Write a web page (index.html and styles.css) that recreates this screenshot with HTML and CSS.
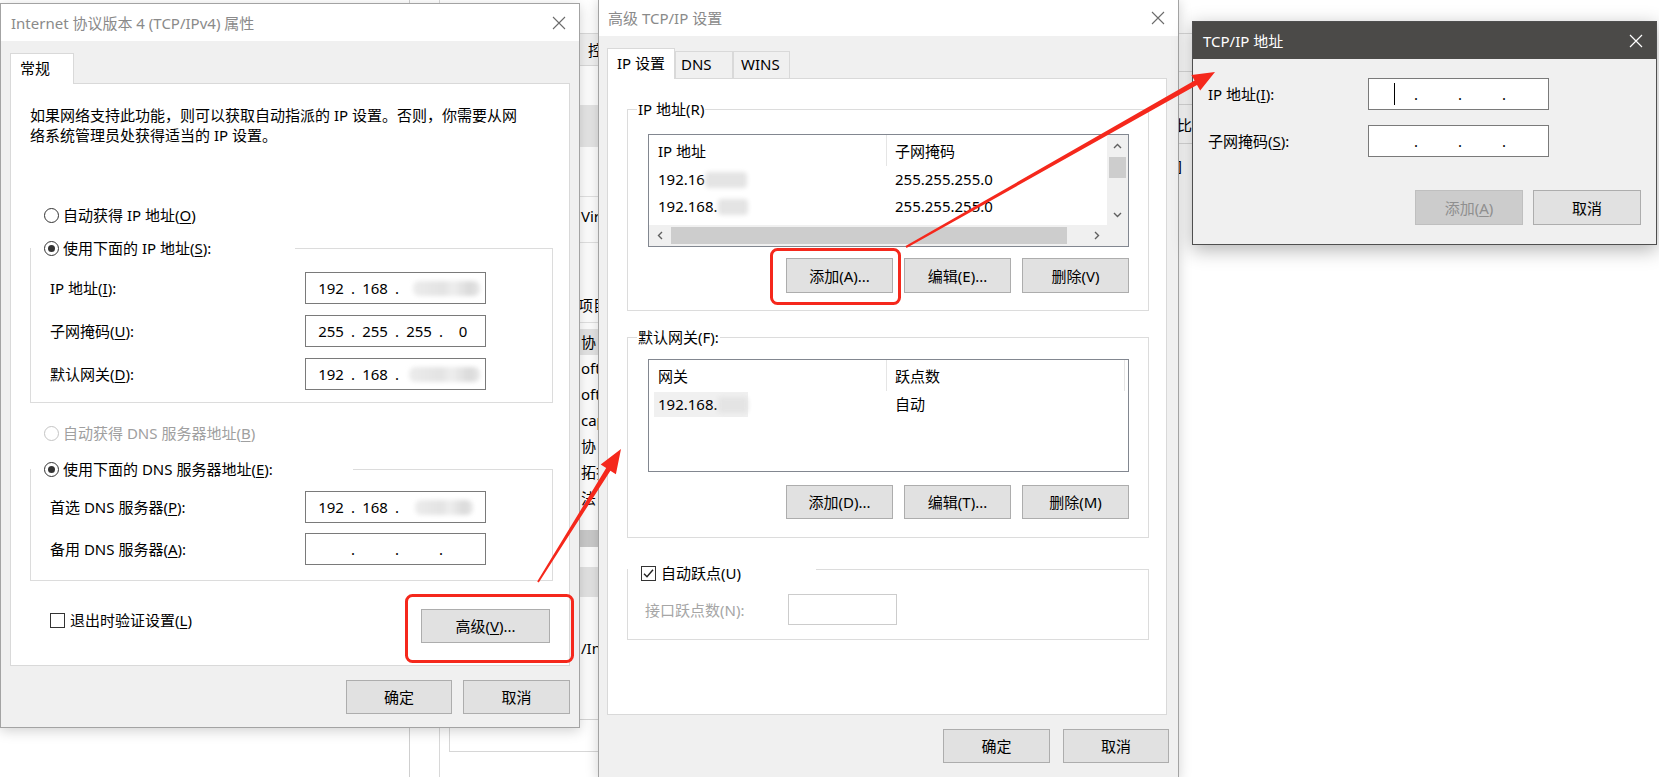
FILE: index.html
```html
<!DOCTYPE html>
<html lang="zh-CN">
<head>
<meta charset="utf-8">
<title>TCP/IP 设置</title>
<link rel="stylesheet" href="styles.css">
</head>
<body>

<div class="bg bg1">
  <div class="bg1-pane">
    <div class="bgrow r-a"></div>
    <div class="bgrow r-b"><span class="bgt">控</span></div>
    <div class="bgrow r-c"></div>
    <div class="bgrow r-d"></div>
    <div class="bgrow r-e"></div>
    <div class="bgrow r-f"><span class="bgt">Vir</span></div>
    <div class="bgrow r-g"><span class="bgt">项目</span></div>
    <div class="bglist">
      <div class="bgli sel"><span class="bgt">协</span></div>
      <div class="bgli"><span class="bgt">oft</span></div>
      <div class="bgli"><span class="bgt">oft</span></div>
      <div class="bgli"><span class="bgt">cap</span></div>
      <div class="bgli"><span class="bgt">协</span></div>
      <div class="bgli"><span class="bgt">拓扑</span></div>
      <div class="bgli"><span class="bgt">法</span></div>
    </div>
    <div class="band dark"></div>
    <div class="band light"></div>
    <div class="bgtext2"><span class="bgt">/In<br>互通</span></div>
    <div class="bgbox"></div>
  </div>
</div>

<div class="bg bg2">
  <div class="b2row b2-a"></div>
  <div class="b2row b2-b"></div>
  <div class="b2row b2-c"></div>
  <div class="b2row b2-d"><span class="bgt">比适</span></div>
  <div class="b2-t"><span class="bgt">]<br>缆<br>ek</span></div>
</div>

<!-- Dialog 1 -->
<div class="win win-props">
  <div class="titlebar">
    <span class="title">Internet 协议版本 4 (TCP/IPv4) 属性</span>
    <span class="close"><svg width="14" height="14" viewBox="0 0 14 14"><path d="M1 1L13 13M13 1L1 13" stroke="currentColor" stroke-width="1.1" fill="none"/></svg></span>
  </div>
  <div class="wbody">
    <div class="tabs"><div class="tab active tab-gen">常规</div></div>
    <div class="panel">
      <p class="desc">如果网络支持此功能，则可以获取自动指派的 IP 设置。否则，你需要从网<br>络系统管理员处获得适当的 IP 设置。</p>
      <div class="radio r1"><span class="rb"></span><span>自动获得 IP 地址(<u>O</u>)</span></div>
      <div class="group g1">
        <div class="legend"><div class="radio"><span class="rb on"></span><span>使用下面的 IP 地址(<u>S</u>):</span></div></div>
        <div class="rows">
          <div class="frow"><span class="lbl">IP 地址(<u>I</u>):</span>
            <div class="ip"><span class="seg">192</span><span class="dot">.</span><span class="seg">168</span><span class="dot">.</span><span class="smwrap"><i class="smudge sm-ip"></i></span></div></div>
          <div class="frow"><span class="lbl">子网掩码(<u>U</u>):</span>
            <div class="ip"><span class="seg">255</span><span class="dot">.</span><span class="seg">255</span><span class="dot">.</span><span class="seg">255</span><span class="dot">.</span><span class="seg">0</span></div></div>
          <div class="frow"><span class="lbl">默认网关(<u>D</u>):</span>
            <div class="ip"><span class="seg">192</span><span class="dot">.</span><span class="seg">168</span><span class="dot">.</span><span class="smwrap"><i class="smudge sm-gw"></i></span></div></div>
        </div>
      </div>
      <div class="radio dis r3"><span class="rb"></span><span>自动获得 DNS 服务器地址(<u>B</u>)</span></div>
      <div class="group g2">
        <div class="legend"><div class="radio"><span class="rb on"></span><span>使用下面的 DNS 服务器地址(<u>E</u>):</span></div></div>
        <div class="rows">
          <div class="frow"><span class="lbl">首选 DNS 服务器(<u>P</u>):</span>
            <div class="ip"><span class="seg">192</span><span class="dot">.</span><span class="seg">168</span><span class="dot">.</span><span class="smwrap"><i class="smudge sm-dns"></i></span></div></div>
          <div class="frow"><span class="lbl">备用 DNS 服务器(<u>A</u>):</span>
            <div class="ip"><span class="seg"></span><span class="dot">.</span><span class="seg"></span><span class="dot">.</span><span class="seg"></span><span class="dot">.</span><span class="seg"></span></div></div>
        </div>
      </div>
      <div class="bottom-row">
        <div class="check"><span class="cb"></span><span>退出时验证设置(<u>L</u>)</span></div>
        <div class="btn btn-adv">高级(<u>V</u>)...</div>
      </div>
    </div>
    <div class="footer f1">
      <div class="btn b-ok">确定</div>
      <div class="btn b-cancel">取消</div>
    </div>
  </div>
</div>

<!-- Dialog 2 -->
<div class="win win-adv">
  <div class="titlebar">
    <span class="title">高级 TCP/IP 设置</span>
    <span class="close"><svg width="14" height="14" viewBox="0 0 14 14"><path d="M1 1L13 13M13 1L1 13" stroke="currentColor" stroke-width="1.1" fill="none"/></svg></span>
  </div>
  <div class="wbody">
    <div class="tabs">
      <div class="tab active tab-ip">IP 设置</div>
      <div class="tab idle tab-dns">DNS</div>
      <div class="tab idle tab-wins">WINS</div>
    </div>
    <div class="panel">
      <div class="group ga">
        <div class="legend leg2">IP 地址(R)</div>
        <div class="gin">
          <div class="lv lv-ip">
            <div class="lv-main">
              <div class="lv-head"><div class="lh c1">IP 地址</div><div class="lh c2">子网掩码</div></div>
              <div class="lv-row"><div class="c1">192.16<i class="lsm w42"></i></div><div class="c2">255.255.255.0</div></div>
              <div class="lv-row"><div class="c1">192.168.<i class="lsm w30"></i></div><div class="c2">255.255.255.0</div></div>
            </div>
            <div class="vscroll">
              <div class="sbtn"><svg width="9" height="6" viewBox="0 0 9 6"><path d="M1 5L4.5 1.5L8 5" fill="none" stroke="#606060" stroke-width="1.4"/></svg></div>
              <div class="vthumb"></div>
              <div class="vfill"></div>
              <div class="sbtn"><svg width="9" height="6" viewBox="0 0 9 6"><path d="M1 1L4.5 4.5L8 1" fill="none" stroke="#606060" stroke-width="1.4"/></svg></div>
            </div>
            <div class="hscroll">
              <div class="sbtn"><svg width="6" height="9" viewBox="0 0 6 9"><path d="M5 1L1.5 4.5L5 8" fill="none" stroke="#606060" stroke-width="1.4"/></svg></div>
              <div class="hthumb"></div>
              <div class="sbtn"><svg width="6" height="9" viewBox="0 0 6 9"><path d="M1 1L4.5 4.5L1 8" fill="none" stroke="#606060" stroke-width="1.4"/></svg></div>
            </div>
            <div class="corner"></div>
          </div>
          <div class="lv-btns bt-a">
            <div class="btn">添加(A)...</div>
            <div class="btn">编辑(E)...</div>
            <div class="btn">删除(V)</div>
          </div>
        </div>
      </div>
      <div class="group gb">
        <div class="legend leg2">默认网关(F):</div>
        <div class="gin">
          <div class="lv lv-gw">
            <div class="lv-head"><div class="lh c1">网关</div><div class="lh c2 c2b">跃点数</div><div class="lh c3"></div></div>
            <div class="lv-row"><div class="c1"><span class="ghl">192.168.<i class="lsm w30"></i></span></div><div class="c2">自动</div></div>
          </div>
          <div class="lv-btns bt-b">
            <div class="btn">添加(D)...</div>
            <div class="btn">编辑(T)...</div>
            <div class="btn">删除(M)</div>
          </div>
        </div>
      </div>
      <div class="group gc">
        <div class="legend leg3"><div class="check"><span class="cb on"><svg width="13" height="13" viewBox="0 0 13 13"><path d="M2 6.8L5 9.8L11 2.8" fill="none" stroke="#222" stroke-width="1.4"/></svg></span><span>自动跃点(U)</span></div></div>
        <div class="gin gin-c">
          <span class="lbl-dis">接口跃点数(N):</span>
          <div class="num-dis"></div>
        </div>
      </div>
    </div>
    <div class="footer f2">
      <div class="btn b-ok2">确定</div>
      <div class="btn b-cancel2">取消</div>
    </div>
  </div>
</div>

<!-- Dialog 3 -->
<div class="win win-addr">
  <div class="titlebar">
    <span class="title">TCP/IP 地址</span>
    <span class="close"><svg width="14" height="14" viewBox="0 0 14 14"><path d="M1 1L13 13M13 1L1 13" stroke="currentColor" stroke-width="1.2" fill="none"/></svg></span>
  </div>
  <div class="wbody">
    <div class="addr-rows">
      <div class="frow"><span class="lbl">IP 地址(<u>I</u>):</span>
        <div class="ip"><span class="seg"><i class="caret"></i></span><span class="dot">.</span><span class="seg"></span><span class="dot">.</span><span class="seg"></span><span class="dot">.</span><span class="seg"></span></div></div>
      <div class="frow"><span class="lbl">子网掩码(<u>S</u>):</span>
        <div class="ip"><span class="seg"></span><span class="dot">.</span><span class="seg"></span><span class="dot">.</span><span class="seg"></span><span class="dot">.</span><span class="seg"></span></div></div>
    </div>
    <div class="addr-btns">
      <div class="btn disabled">添加(<u>A</u>)</div>
      <div class="btn">取消</div>
    </div>
  </div>
</div>

<svg class="annot" width="1659" height="777" viewBox="0 0 1659 777">
  <rect x="406.5" y="595.5" width="166" height="66" rx="6" fill="none" stroke="#f5281c" stroke-width="3"/>
  <rect x="771.5" y="249.5" width="128" height="54" rx="6" fill="none" stroke="#f5281c" stroke-width="3"/>
  <polygon fill="#f5281c" points="537.2,581.5 606.2,468.1 600.7,464.6 621,449 615.9,474.2 610.4,470.7 538.8,582.5"/>
  <polygon fill="#f5281c" points="905.5,246.1 1194.6,80.6 1191.4,75.0 1215,72 1200.2,90.6 1197.0,85.0 906.5,247.9"/>
</svg>

</body>
</html>
```

FILE: styles.css
```css
* { box-sizing: border-box; }
html, body { margin: 0; padding: 0; }
body {
  position: relative;
  width: 1659px;
  height: 777px;
  overflow: hidden;
  background: #fff;
  font-family: "Noto Sans", "Noto Sans CJK SC", sans-serif;
  font-size: 15px;
  line-height: 20px;
  color: #000;
}
u { text-decoration: underline; text-underline-offset: 2px; text-decoration-thickness: 1px; }

/* ---------- background windows (behind the dialogs) ---------- */
.bg { position: absolute; background: #fff; }
.bg1 { left: 409px; top: 0; width: 420px; height: 777px; border-left: 1px solid #cfcfcf; display: flex; }
.bg1-pane { margin-left: 29px; flex: 1; border-left: 1px solid #d8d8d8; display: flex; flex-direction: column; }
.bgrow { flex: none; display: flex; align-items: flex-start; }
.bgt { padding-left: 141px; white-space: nowrap; }
.r-a { height: 33px; }
.r-b { height: 33px; background: #f2f2f2; border-top: 1px solid #dadada; border-bottom: 1px solid #dadada; align-items: center; }
.r-b .bgt { padding-left: 148px; }
.r-c { height: 39px; }
.r-d { height: 42px; background: #e6e6e6; }
.r-e { height: 50px; border-bottom: 1px solid #e2e2e2; }
.r-f { height: 46px; border-bottom: 1px solid #e2e2e2; padding-top: 9px; }
.r-g { height: 80px; border-bottom: 1px solid #e2e2e2; padding-top: 52px; }
.r-g .bgt { padding-left: 138px; }
.bglist { margin-top: 6px; display: flex; flex-direction: column; flex: none; }
.bgli { height: 26px; display: flex; align-items: center; }
.bgli.sel { background: #e5e5e5; }
.band { flex: none; }
.band.dark { margin-top: 19px; height: 17px; background: #cbcbcb; }
.band.light { margin-top: 20px; height: 30px; background: #e4e4e4; }
.bgtext2 { margin-top: 43px; line-height: 16px; flex: none; }
.bgbox { margin-top: 47px; margin-left: 9px; height: 33px; border: 1px solid #d6d6d6; flex: none; }

.bg2 { left: 1120px; top: 0; width: 72px; height: 250px; display: flex; flex-direction: column; }
.b2row { flex: none; border-bottom: 1px solid #dcdcdc; }
.b2-a { height: 34px; }
.b2-b { height: 38px; }
.b2-c { height: 33px; }
.b2-d { height: 39px; padding-top: 10px; }
.b2-t { margin-top: 10px; line-height: 22px; }
.bg2 .bgt { padding-left: 57px; }

/* ---------- dialog common ---------- */
.win {
  position: absolute;
  display: flex;
  flex-direction: column;
  background: #f0f0f0;
  border: 1px solid #a3a3a3;
  box-shadow: 0 3px 12px rgba(0, 0, 0, 0.18);
}
.titlebar {
  flex: none;
  height: 37px;
  display: flex;
  align-items: center;
  justify-content: space-between;
  background: #fff;
  color: #8a8a8a;
  padding: 0 13px 0 10px;
  white-space: nowrap;
}
.close { display: flex; color: #6b6b6b; }
.close svg { display: block; }
.wbody { flex: 1; display: flex; flex-direction: column; }

.tabs { flex: none; display: flex; align-items: flex-end; height: 31px; margin-bottom: -1px; position: relative; z-index: 1; }
.tab { border: 1px solid #d9d9d9; border-bottom: none; white-space: nowrap; }
.tab.active { height: 31px; background: #fff; line-height: 28px; }
.tab.idle { height: 27px; margin-bottom: 1px; background: #f0f0f0; line-height: 25px; }

.panel { flex: none; background: #fff; border: 1px solid #d9d9d9; display: flex; flex-direction: column; }

.footer { flex: none; display: flex; justify-content: flex-end; margin-top: 14px; }
.btn {
  display: flex;
  align-items: center;
  justify-content: center;
  height: 34px;
  background: #e1e1e1;
  border: 1px solid #adadad;
  white-space: nowrap;
  flex: none;
}
.btn.disabled { background: #cccccc; border-color: #bfbfbf; color: #8f8f8f; }

.group { border: 1px solid #dcdcdc; display: flex; flex-direction: column; flex: none; }
.legend { margin-top: -11px; height: 20px; background: #fff; align-self: flex-start; white-space: nowrap; }

.radio { display: flex; align-items: center; height: 20px; padding-left: 14px; white-space: nowrap; flex: none; }
.rb {
  width: 15px; height: 15px;
  border: 1px solid #333;
  border-radius: 50%;
  margin-right: 4px;
  display: flex; align-items: center; justify-content: center;
  flex: none;
  background: #fff;
}
.rb.on::after { content: ""; width: 7px; height: 7px; border-radius: 50%; background: #333; }
.radio.dis { color: #a0a0a0; }
.radio.dis .rb { border-color: #c4c4c4; }

.check { display: flex; align-items: center; height: 20px; white-space: nowrap; }
.cb {
  width: 15px; height: 15px;
  border: 1px solid #333;
  background: #fff;
  margin-right: 5px;
  flex: none;
  display: flex; align-items: center; justify-content: center;
}
.cb svg { display: block; }

.frow { display: flex; align-items: center; }
.lbl { flex: none; white-space: nowrap; }
.ip {
  display: flex;
  align-items: center;
  width: 181px;
  height: 32px;
  border: 1px solid #7a7a7a;
  background: #fff;
  padding-left: 7px;
  flex: none;
}
.seg { width: 36px; text-align: center; flex: none; display: flex; justify-content: center; }
.dot { width: 8px; text-align: center; flex: none; }
.smwrap { width: 80px; display: flex; align-items: center; flex: none; }
.smudge {
  display: block;
  height: 15px;
  border-radius: 6px;
  filter: blur(2px);
  background: linear-gradient(90deg, #ececec, #e3e3e3 45%, #eeeeee 60%, #dadada 85%, #e8e8e8);
}
.sm-ip { margin-left: 12px; width: 67px; }
.sm-gw { margin-left: 8px; width: 71px; }
.sm-dns { margin-left: 14px; width: 58px; }
.caret { display: block; width: 1px; height: 22px; background: #000; }

/* ---------- dialog 1 ---------- */
.win-props { left: 0; top: 3px; width: 580px; height: 725px; }
.win-props .wbody { padding: 12px 9px 0 9px; }
.tab-gen { width: 64px; padding-left: 9px; }
.win-props .panel { height: 583px; padding: 21px 16px 0 19px; }
.desc { margin: 0; white-space: nowrap; }
.r1 { margin-top: 60px; }
.legend .radio { padding-left: 13px; }
.g1 { margin-top: 23px; }
.g1 .legend { width: 264px; }
.rows { display: flex; flex-direction: column; }
.g1 .rows { padding: 14px 0 12px 19px; gap: 11px; }
.r3 { margin-top: 20px; }
.g2 { margin-top: 26px; }
.g2 .legend { width: 322px; }
.g2 .rows { padding: 12px 0 15px 19px; gap: 10px; }
.win-props .lbl { width: 255px; }
.bottom-row { flex: none; display: flex; justify-content: space-between; align-items: flex-start; margin-top: 28px; padding-right: 3px; }
.bottom-row .check { margin-top: 1px; padding-left: 20px; }
.btn-adv { width: 129px; }
.f1 { gap: 11px; }
.b-ok { width: 106px; }
.b-cancel { width: 107px; }

/* ---------- dialog 2 ---------- */
.win-adv { left: 598px; top: -2px; width: 581px; height: 780px; }
.win-adv .titlebar { padding-left: 9px; }
.win-adv .wbody { padding: 12px 11px 0 8px; }
.tab-ip { width: 68px; padding-left: 9px; }
.tab-dns { width: 58px; padding-left: 5px; }
.tab-wins { width: 57px; padding-left: 7px; }
.win-adv .panel { height: 637px; padding: 0 17px 0 19px; }
.leg2 { margin-left: 9px; padding: 0 1px; }
.ga { margin-top: 30px; }
.ga .gin { padding: 15px 19px 17px 20px; }
.gb { margin-top: 26px; }
.gb .gin { padding: 12px 19px 18px 20px; }
.gc { margin-top: 31px; }
.leg3 { width: 188px; padding-left: 13px; margin-top: -7px; }
.gin-c { padding: 11px 0 14px 17px; display: flex; align-items: center; }
.lbl-dis { width: 143px; flex: none; color: #a6a6a6; white-space: nowrap; }
.num-dis { width: 109px; height: 31px; border: 1px solid #cccccc; background: #fff; flex: none; }

.lv { border: 1px solid #828790; background: #fff; height: 113px; }
.lv-ip { display: grid; grid-template-columns: 1fr 21px; grid-template-rows: 1fr 21px; }
.lv-main { overflow: hidden; }
.lv-head { display: flex; height: 31px; }
.lh { display: flex; align-items: center; white-space: nowrap; }
.c1 { width: 238px; padding-left: 9px; flex: none; white-space: nowrap; display: flex; align-items: center; }
.c2 { padding-left: 8px; white-space: nowrap; }
.lh.c1 { border-right: 1px solid #e5e5e5; }
.c2b { width: 238px; flex: none; border-right: 1px solid #e5e5e5; }
.lv-row { display: flex; height: 27px; line-height: 27px; }
.lsm { display: inline-block; height: 16px; filter: blur(2px); background: #e4e4e4; border-radius: 4px; }
.w42 { width: 42px; }
.w30 { width: 30px; }
.ghl { display: inline-flex; align-items: center; height: 25px; background: #f0f0f0; margin-left: -4px; padding-left: 4px; }

.vscroll { background: #f0f0f0; display: flex; flex-direction: column; }
.hscroll { background: #f0f0f0; display: flex; }
.corner { background: #f0f0f0; }
.sbtn { width: 21px; height: 21px; flex: none; display: flex; align-items: center; justify-content: center; }
.vthumb { height: 21px; margin: 1px 2px 0; background: #cdcdcd; flex: none; }
.vfill { flex: 1; }
.hthumb { flex: 1; margin: 2px 19px 2px 1px; background: #cdcdcd; }

.lv-btns { display: flex; justify-content: flex-end; gap: 11px; }
.lv-btns .btn { width: 107px; }
.bt-a { margin-top: 11px; }
.bt-a .btn { height: 35px; }
.bt-b { margin-top: 13px; }

.f2 { gap: 13px; margin-right: -2px; }
.b-ok2 { width: 107px; }
.b-cancel2 { width: 106px; }

/* ---------- dialog 3 ---------- */
.win-addr { left: 1192px; top: 21px; width: 465px; height: 224px; border-color: #4f4f4f; box-shadow: 0 5px 18px rgba(0, 0, 0, 0.3); }
.win-addr .titlebar { background: #4b4a48; color: #fff; }
.win-addr .close { color: #fff; }
.win-addr .wbody { padding: 19px 15px 0 15px; }
.addr-rows { display: flex; flex-direction: column; gap: 15px; }
.addr-rows .lbl { width: 160px; }
.addr-btns { display: flex; justify-content: flex-end; gap: 10px; margin-top: 33px; }
.addr-btns .btn { width: 108px; height: 35px; }

/* ---------- annotation overlay ---------- */
.annot { position: absolute; left: 0; top: 0; pointer-events: none; z-index: 10; }
```
